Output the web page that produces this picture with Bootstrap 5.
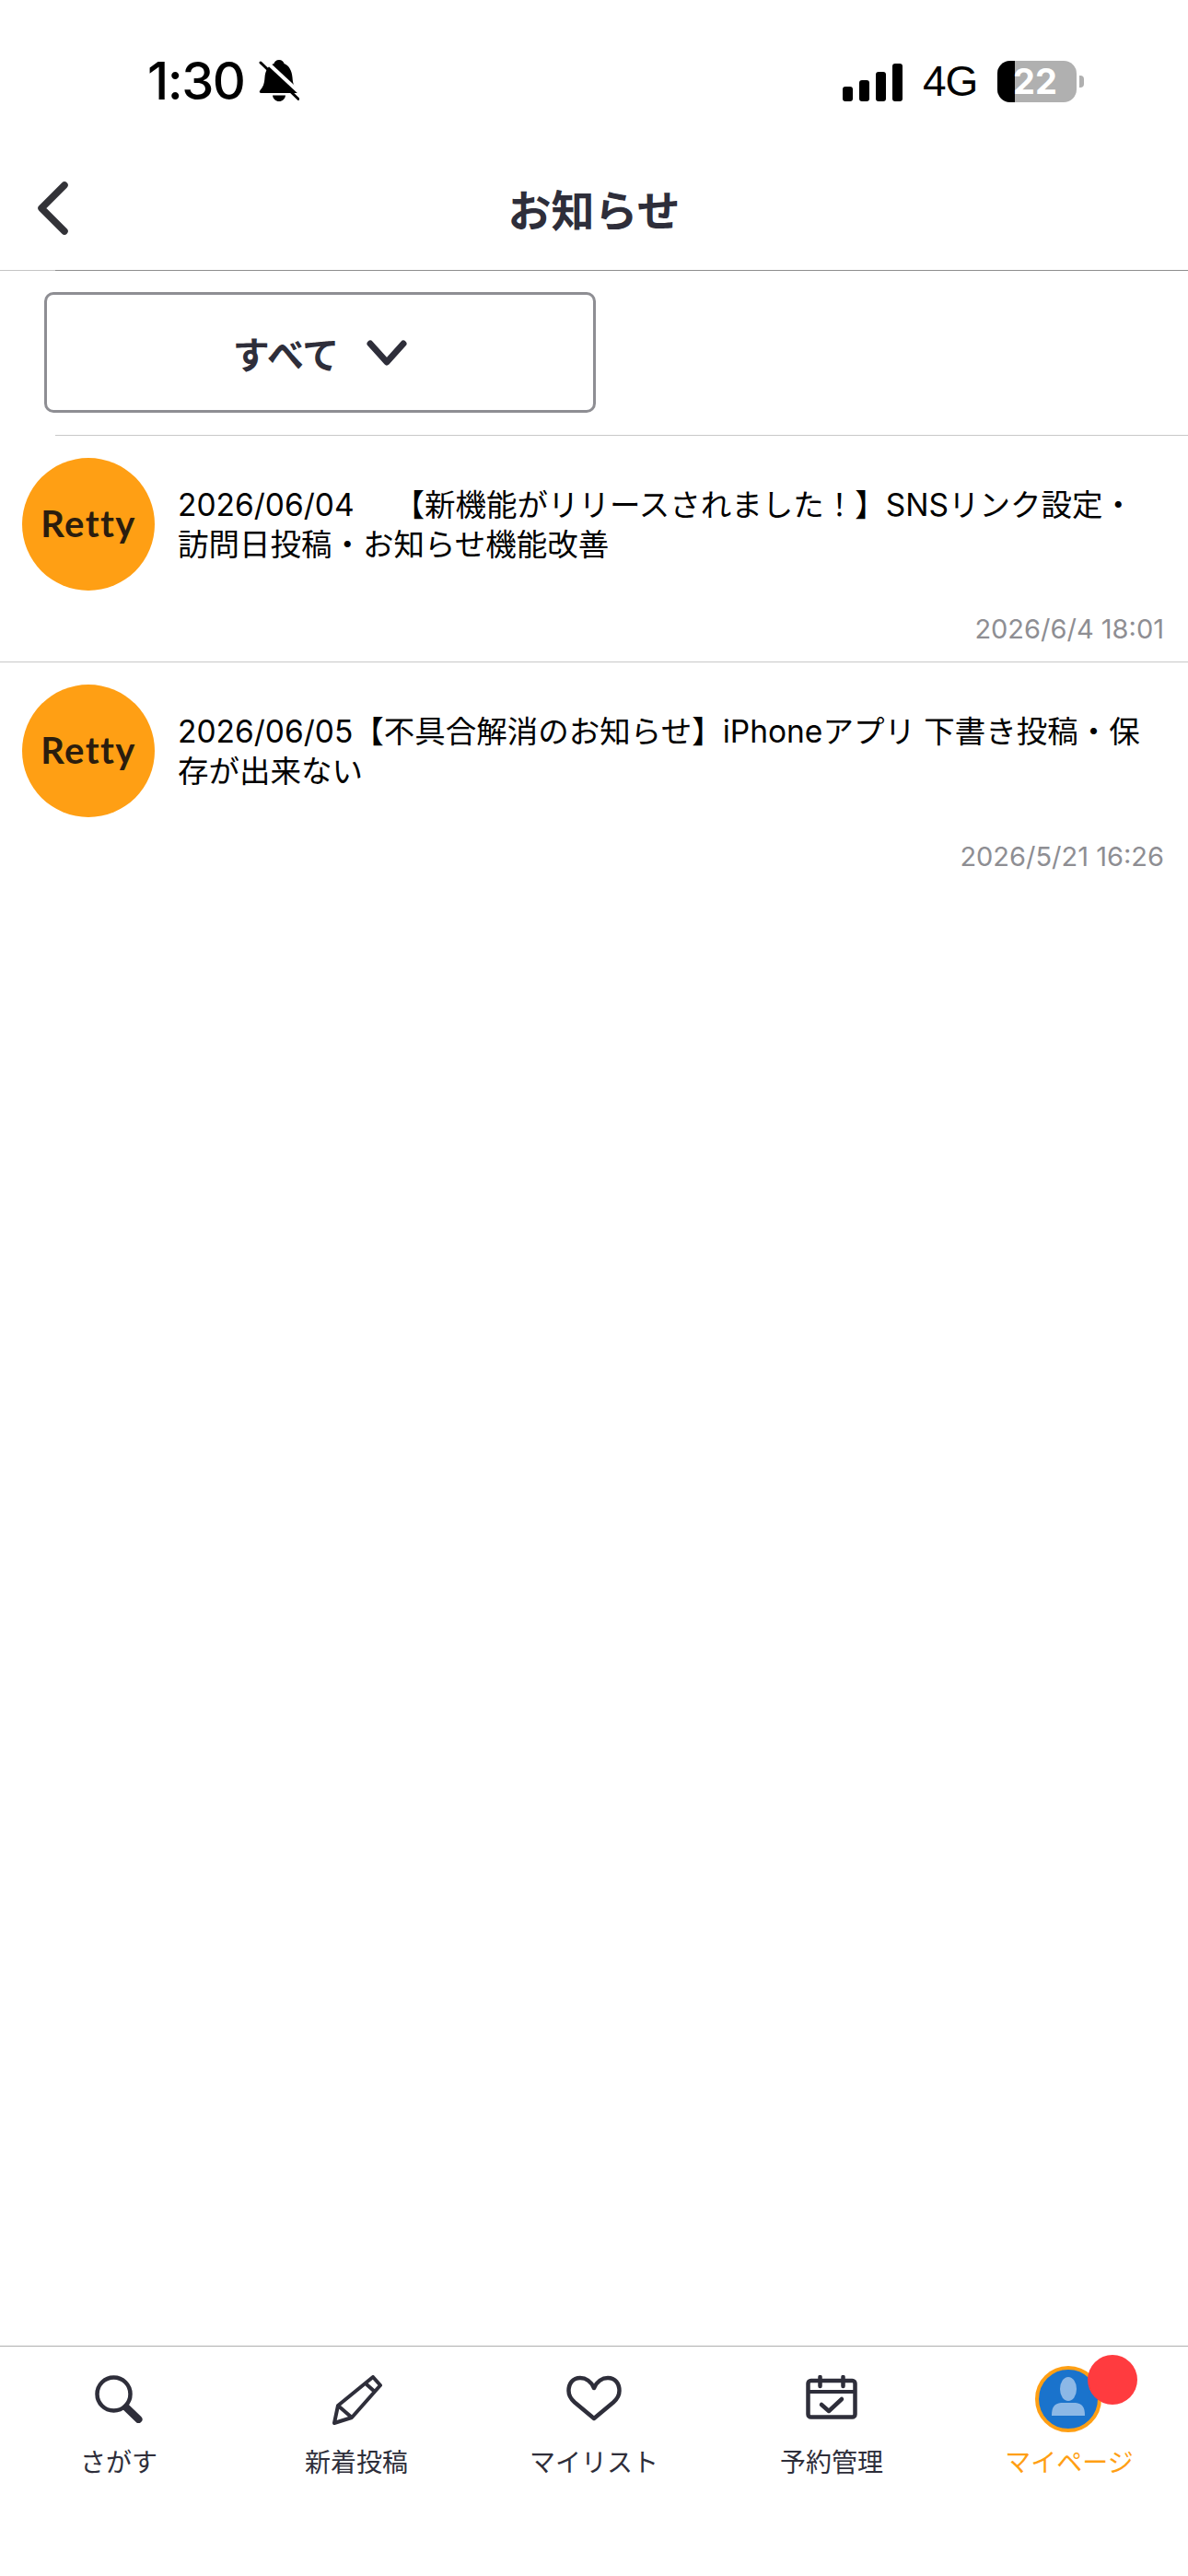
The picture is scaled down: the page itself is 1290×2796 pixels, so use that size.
<!DOCTYPE html>
<html lang="ja">
<head>
<meta charset="utf-8">
<title>お知らせ</title>
<link href="https://cdn.jsdelivr.net/npm/bootstrap@5.3.0/dist/css/bootstrap.min.css" rel="stylesheet">
<style>
body{width:1290px;height:2796px;background:#fff;font-family:Inter,"Noto Sans CJK JP",sans-serif;color:#000;overflow:hidden}
.phone{height:2796px}
.statusrow{height:175px;padding-top:65px}
.clock-wrap{margin-left:160px;gap:14px;height:46px}
.clock{font-family:Inter,sans-serif;font-size:56px;font-weight:500;line-height:46px;letter-spacing:-1.5px;width:107px}
.sig-wrap{margin-right:113px;height:46px}
.signal{gap:7px;width:65px;height:43px;margin-right:22px}
.signal i{display:block;width:11px;background:#000;border-radius:3px}
.h1b{height:16px}.h2b{height:23px}.h3b{height:32px}.h4b{height:41px}
.net{font-family:"Liberation Sans",sans-serif;font-size:46px;line-height:46px;width:58px;margin-right:23px;letter-spacing:-1px}
.batt{width:86px;height:45px;background:#b0b0b0;border-radius:14px;color:#fff;font-family:Inter,sans-serif;font-weight:700;font-size:38px;line-height:45px}
.batt-fill{flex:none;width:19px;height:45px;background:#000;border-radius:14px 0 0 14px}
.batt-num{margin-left:-2px}
.batt-nub{width:5px;height:13px;background:#b0b0b0;border-radius:0 4px 4px 0;margin-left:3px}
.topbar{height:118px;position:relative;padding-bottom:18px}
.back-btn{position:absolute;left:39px;top:21px;line-height:0}
.page-title{font-family:"Noto Sans CJK JP",sans-serif;font-weight:700;font-size:47px;color:#2e2e3a;line-height:1;margin:0}
.rule-top{height:1px;background:#8e8e8e;margin-left:60px}
.rule-wrap{background:#c4c4c4}
.filter-area{height:178px;padding:23px 0 0 48px}
.filter-btn{width:599px;height:131px;border:3px solid #8e8e93;border-radius:10px;background:#fff;color:#2e2e3a;font-size:40px;font-weight:700;font-family:"Noto Sans CJK JP",sans-serif;gap:30px;padding:0}
.filter-btn:hover,.filter-btn:active{background:#fff;color:#2e2e3a;border-color:#8e8e93}
.rule-light{height:1px;background:#c8c8c8;margin-left:60px}
.news-item{height:246px;border-bottom:1px solid #c8c8c8;padding:24px 0 0 24px;border-radius:0;border-left:0;border-right:0;border-top:0}
.logo-disc{width:144px;height:144px;flex:none;background:#ff9f14;border-radius:50%;color:#2b1d0e;font-family:Lato,sans-serif;font-weight:700;font-size:40px;letter-spacing:1.4px;line-height:1;padding-bottom:3px}
.news-body{margin-left:25px;padding-top:30px;min-width:0;flex:1}
.news-text{font-size:33.5px;line-height:42.6px;color:#000;margin:0;padding-right:50px;font-family:Inter,"Noto Sans CJK JP",sans-serif}
.stamp{margin-top:auto;padding:0 26px 17px 0;text-align:right;font-size:29px;line-height:36px;color:#8e8e93;font-family:Inter,sans-serif}
.tabbar{margin-top:auto;height:250px;border-top:1px solid #b0b0b0}
.tab-cell{width:258px;position:relative;color:#2e2e3a;font-size:28px;line-height:1;font-family:"Noto Sans CJK JP",sans-serif}
.tab-ico{height:96px;padding-top:31px;line-height:0}
.tab-ico-me{padding-top:21px}
.tab-lab{margin-top:14px}
.tab-on{color:#ff9f14}
.me-disc{width:72px;height:72px;border-radius:50%;border:4px solid #ff9f14;background:#1a73cc;overflow:hidden;margin-left:-2px}
.dot{position:absolute;left:149px;top:9px;width:54px;height:54px;border-radius:50%;background:#ff3b3f}
</style>
</head>
<body>
<div class="phone d-flex flex-column">
  <div class="statusrow d-flex justify-content-between align-items-start">
    <div class="clock-wrap d-flex align-items-center">
      <span class="clock">1:30</span>
      <svg width="44" height="46" viewBox="0 0 44 46" aria-hidden="true"><path d="M22 0c-3 0-5 2-5.500 4C10 6 7 12 6.500 19 6 27 4 30 1.500 33 0 35 1 36 3 36h38c2 0 3-1 1.500-3C39 30 37 27 36.500 19 36 12 33 6 27.500 4 27 2 25 0 22 0z" fill="#000"/><path d="M15 38.500h14c-.5 4-3.500 6.500-7 6.500s-6.500-2.500-7-6.500z" fill="#000"/><path d="M5-1l42 39" stroke="#fff" stroke-width="4"/><path d="M2 3l41 39.500" stroke="#000" stroke-width="3" stroke-linecap="round"/></svg>
    </div>
    <div class="sig-wrap d-flex align-items-center">
      <div class="signal d-flex align-items-end"><i class="h1b"></i><i class="h2b"></i><i class="h3b"></i><i class="h4b"></i></div>
      <span class="net">4G</span>
      <div class="batt d-flex"><div class="batt-fill"></div><span class="batt-num">22</span></div>
      <div class="batt-nub"></div>
    </div>
  </div>
  <header class="topbar d-flex align-items-center justify-content-center">
    <a class="back-btn" href="#" aria-label="戻る"><svg width="36" height="60" viewBox="0 0 36 60"><path d="M31 5 6 30l25 25" fill="none" stroke="#333338" stroke-width="7.500" stroke-linecap="round" stroke-linejoin="round"/></svg></a>
    <h1 class="page-title">お知らせ</h1>
  </header>
  <div class="rule-wrap"><div class="rule-top"></div></div>
  <div class="filter-area">
    <button type="button" class="btn filter-btn d-flex align-items-center justify-content-center">すべて
      <svg width="44" height="28" viewBox="0 0 44 28" aria-hidden="true"><path d="M4 4 22 24 40 4" fill="none" stroke="#2e2e3a" stroke-width="7" stroke-linecap="round" stroke-linejoin="round"/></svg>
    </button>
  </div>
  <div class="rule-light"></div>
  <div class="list-group list-group-flush">
    <div class="list-group-item news-item d-flex">
      <div class="logo-disc d-flex align-items-center justify-content-center">Retty</div>
      <div class="news-body d-flex flex-column"><p class="news-text">2026/06/04　 【新機能がリリースされました！】SNSリンク設定・訪問日投稿・お知らせ機能改善</p><span class="stamp">2026/6/4 18:01</span></div>
    </div>
    <div class="list-group-item news-item d-flex">
      <div class="logo-disc d-flex align-items-center justify-content-center">Retty</div>
      <div class="news-body d-flex flex-column"><p class="news-text">2026/06/05【不具合解消のお知らせ】iPhoneアプリ 下書き投稿・保存が出来ない</p><span class="stamp">2026/5/21 16:26</span></div>
    </div>
  </div>
  <nav class="tabbar d-flex">
    <div class="tab-cell d-flex flex-column align-items-center">
      <div class="tab-ico d-flex justify-content-center"><svg width="52" height="52" viewBox="0 0 52 52"><circle cx="20.500" cy="20.500" r="18" fill="none" stroke="#2e2e3a" stroke-width="4.500"/><path d="M34 35l13.500 13" stroke="#2e2e3a" stroke-width="8" stroke-linecap="round"/></svg></div>
      <span class="tab-lab">さがす</span>
    </div>
    <div class="tab-cell d-flex flex-column align-items-center">
      <div class="tab-ico d-flex justify-content-center"><svg width="56" height="54" viewBox="0 0 56 54"><path d="M46 2 54 11 23 46 4 52l4-19zM39 10l9 8M8 33 23 46" fill="none" stroke="#2e2e3a" stroke-width="4" stroke-linejoin="round"/></svg></div>
      <span class="tab-lab">新着投稿</span>
    </div>
    <div class="tab-cell d-flex flex-column align-items-center">
      <div class="tab-ico d-flex justify-content-center"><svg width="60" height="50" viewBox="0 0 60 50"><path d="M30 14C27 7 21 3 15 3 7 3 2.500 9 2.500 17c0 5 2.500 9 6.500 12.500L30 47l21-17.500c4-3.500 6.500-7.500 6.500-12.500C57.500 9 53 3 45 3c-6 0-12 4-15 11z" fill="none" stroke="#2e2e3a" stroke-width="4.500" stroke-linejoin="round"/></svg></div>
      <span class="tab-lab">マイリスト</span>
    </div>
    <div class="tab-cell d-flex flex-column align-items-center">
      <div class="tab-ico d-flex justify-content-center"><svg width="56" height="48" viewBox="0 0 56 48"><rect x="2.500" y="6" width="51" height="39.500" rx="3" fill="none" stroke="#2e2e3a" stroke-width="4.500"/><path d="M2.500 18h51" stroke="#2e2e3a" stroke-width="4"/><path d="M15.500 2v10M40.500 2v10" stroke="#2e2e3a" stroke-width="4.500" stroke-linecap="round"/><path d="M17 32l8 7 14-13" fill="none" stroke="#2e2e3a" stroke-width="4.500" stroke-linecap="round" stroke-linejoin="round"/></svg></div>
      <span class="tab-lab">予約管理</span>
    </div>
    <div class="tab-cell tab-on d-flex flex-column align-items-center">
      <div class="tab-ico tab-ico-me d-flex justify-content-center">
        <div class="me-disc"><svg width="64" height="64" viewBox="0 0 64 64"><ellipse cx="32" cy="21" rx="9" ry="13" fill="#8cb8e6"/><path d="M14 50c0-10 3-13 10-14h16c7 1 10 4 10 14z" fill="#8cb8e6"/></svg></div>
      </div>
      <span class="dot"></span>
      <span class="tab-lab">マイページ</span>
    </div>
  </nav>
</div>
<script src="https://cdn.jsdelivr.net/npm/bootstrap@5.3.0/dist/js/bootstrap.bundle.min.js"></script>
</body>
</html>
